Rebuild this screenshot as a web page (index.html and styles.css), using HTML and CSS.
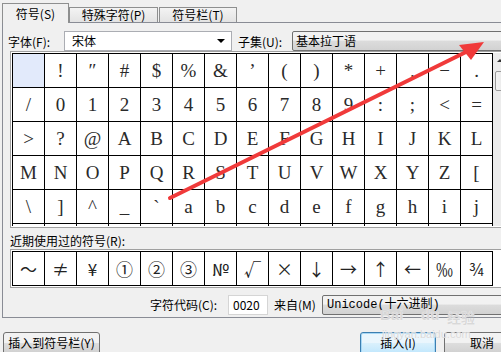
FILE: index.html
```html
<!DOCTYPE html>
<html lang="zh-CN">
<head>
  <meta charset="UTF-8">
  <title>符号</title>
  <link rel="stylesheet" href="styles.css">
</head>
<body>
  <div class="dialog">
    <div class="tabs">
      <div class="tab active">符号(S)</div>
      <div class="tab t2">特殊字符(P)</div>
      <div class="tab t3">符号栏(T)</div>
    </div>

    <div class="panel">
      <div class="font-row">
        <span class="lbl-font">字体(F):</span>
        <div class="combo font-select"><span>宋体</span><i class="caret"></i></div>
        <span class="lbl-subset">子集(U):</span>
        <div class="combo subset-select"><span>基本拉丁语</span></div>
      </div>

      <div class="frame">
        <div class="grid-view">
          <div class="grid">
            <span class="sel"></span><span>!</span><span>″</span><span>#</span><span>$</span><span>%</span><span>&amp;</span><span>’</span><span>(</span><span>)</span><span>*</span><span>+</span><span>,</span><span>−</span><span>.</span>
            <span>/</span><span>0</span><span>1</span><span>2</span><span>3</span><span>4</span><span>5</span><span>6</span><span>7</span><span>8</span><span>9</span><span>:</span><span>;</span><span>&lt;</span><span>=</span>
            <span>&gt;</span><span>?</span><span>@</span><span>A</span><span>B</span><span>C</span><span>D</span><span>E</span><span>F</span><span>G</span><span>H</span><span>I</span><span>J</span><span>K</span><span>L</span>
            <span>M</span><span>N</span><span>O</span><span>P</span><span>Q</span><span>R</span><span>S</span><span>T</span><span>U</span><span>V</span><span>W</span><span>X</span><span>Y</span><span>Z</span><span>[</span>
            <span>\</span><span>]</span><span>^</span><span>_</span><span>`</span><span>a</span><span>b</span><span>c</span><span>d</span><span>e</span><span>f</span><span>g</span><span>h</span><span>i</span><span>j</span>
            <span></span><span></span><span></span><span></span><span></span><span></span><span></span><span></span><span></span><span></span><span></span><span></span><span></span><span></span><span></span>
          </div>
        </div>
        <div class="scrollbar">
          <i class="up"></i>
          <div class="thumb"></div>
        </div>
      </div>

      <div class="recent-label">近期使用过的符号(R):</div>

      <div class="frame">
        <div class="grid recent">
          <span>〜</span><span>≠</span><span>¥</span><span>①</span><span>②</span><span>③</span><span>№</span><span>√</span><span>×</span><span>↓</span><span>→</span><span>↑</span><span>←</span><span>‰</span><span>¾</span>
        </div>
      </div>

      <div class="code-row">
        <span class="lbl-code">字符代码(C):</span>
        <div class="code-input">0020</div>
        <span class="lbl-from">来自(M)</span>
        <div class="combo from-select"><span>Unicode(十六进制)</span></div>
      </div>
    </div>

    <div class="buttons">
      <div class="btn btn-bar">插入到符号栏(Y)</div>
      <div class="btn btn-insert">插入(I)</div>
      <div class="btn btn-cancel">取消</div>
    </div>
  </div>

  <!-- watermark + annotation arrow sit on top of the dialog -->
  <div class="watermark">
    <span class="wm-bai">Bai</span><span class="wm-du">du</span><span class="wm-jy">经验</span>
    <span class="wm-url">jingyan.baidu.com</span>
  </div>

  <svg class="arrow" width="501" height="352" viewBox="0 0 501 352">
    <line x1="170" y1="198" x2="468" y2="51" stroke="#f03a3a" stroke-width="4" stroke-linecap="round"/>
    <polygon points="484,42 459,45 471,60" fill="#f03a3a"/>
  </svg>
</body>
</html>
```

FILE: styles.css
```css
* {
  box-sizing: border-box;
}
body {
  margin: 0;
  width: 501px;
  height: 352px;
  overflow: hidden;
  position: relative;
  background: #f0f0f0;
  color: #000;
  font-family: "Noto Sans CJK SC", "Liberation Sans", sans-serif;
  font-size: 12px;
}
.dialog {
  width: 540px;
}

/* tabs */
.tabs {
  display: flex;
  align-items: flex-end;
  height: 22px;
  padding-left: 2px;
}
.tab {
  height: 15px;
  line-height: 14px;
  border: 1px solid #8e8f8f;
  border-bottom: none;
  background: linear-gradient(#f3f3f3, #e3e3e3);
  text-align: center;
  white-space: nowrap;
}
.tab.active {
  position: relative;
  z-index: 1;
  width: 67px;
  height: 20px;
  line-height: 19px;
  margin-bottom: -1px;
  background: #f0f0f0;
}
.t2 {
  width: 89px;
}
.t3 {
  width: 78px;
  margin-left: 1px;
}

.panel {
  margin-left: 2px;
  border: 1px solid #898c95;
  padding: 8px 0 2px 5px;
  background: #f0f0f0;
}

/* font row */
.font-row {
  display: flex;
  align-items: center;
  height: 20px;
}
.lbl-font {
  width: 56px;
}
.lbl-subset {
  width: 54px;
  margin-left: 6px;
}
.combo {
  height: 20px;
  line-height: 18px;
  padding-left: 4px;
  border: 1px solid #abadb3;
  background: #fff;
  position: relative;
  white-space: nowrap;
}
.font-select {
  width: 168px;
  padding-left: 7px;
}
.caret {
  position: absolute;
  right: 6px;
  top: 7px;
  border-left: 4px solid transparent;
  border-right: 4px solid transparent;
  border-top: 4px solid #000;
}
.subset-select {
  width: 230px;
  padding-left: 3px;
  border-color: #707070;
  border-radius: 2px;
  background: linear-gradient(#f2f2f2 45%, #dcdcdc 50%, #d2d2d2);
}

/* symbol grid */
.frame {
  display: flex;
  margin-left: 2px;
  border: 1px solid #a0a0a0;
  padding: 1px;
  background: #fff;
}
.frame:first-of-type {
  margin-top: 6px;
}
.grid-view {
  height: 173px;
  overflow: hidden;
}
.grid {
  display: grid;
  grid-template-columns: repeat(15, 32px);
  width: 481px;
  border-left: 1px solid #000;
  border-top: 1px solid #000;
}
.grid span {
  height: 34px;
  display: flex;
  align-items: center;
  justify-content: center;
  border-right: 1px solid #000;
  border-bottom: 1px solid #000;
  font-family: "Liberation Serif", "DejaVu Serif", serif;
  font-size: 19px;
  color: #2a2a2a;
}
.grid span.sel {
  background: #e2eafb;
}
.grid.recent span {
  font-family: "Noto Sans CJK SC", "DejaVu Sans", sans-serif;
  font-size: 17px;
  color: #222;
}
.scrollbar {
  width: 17px;
  height: 173px;
  background: #ececec;
  padding-top: 6px;
}
.scrollbar .up {
  display: block;
  margin-left: 4px;
  width: 0;
  border-left: 3px solid transparent;
  border-right: 3px solid transparent;
  border-bottom: 3px solid #333;
}
.scrollbar .thumb {
  margin: 9px 0 0 2px;
  width: 14px;
  height: 20px;
  border: 1px solid #9a9a9a;
  border-radius: 2px;
  background: linear-gradient(90deg, #f4f4f4, #e2e2e2);
}

.recent-label {
  height: 21px;
  padding: 5px 0 0 2px;
  line-height: 16px;
}

/* code row */
.code-row {
  display: flex;
  align-items: center;
  height: 21px;
  margin-top: 6px;
  padding-left: 142px;
}
.lbl-code {
  width: 78px;
}
.code-input {
  width: 40px;
  height: 20px;
  line-height: 18px;
  padding-left: 4px;
  border: 1px solid #d5d5d5;
  background: #fff;
}
.lbl-from {
  width: 54px;
  padding-left: 6px;
}
.from-select {
  width: 200px;
  border-color: #707070;
  border-radius: 2px;
  background: linear-gradient(#f2f2f2 45%, #dcdcdc 50%, #d2d2d2);
  font-family: "Liberation Mono", "Noto Sans CJK SC", monospace;
}

/* buttons */
.buttons {
  display: flex;
  margin-top: 14px;
}
.btn {
  height: 23px;
  line-height: 19px;
  text-align: center;
  border: 1px solid #707070;
  border-radius: 3px;
  background: linear-gradient(#f2f2f2 45%, #dddddd 50%, #cfcfcf);
  white-space: nowrap;
}
.btn-bar {
  width: 97px;
  margin-left: 3px;
}
.btn-insert {
  width: 76px;
  margin-left: 260px;
  border-color: #3c7fb1;
  box-shadow: inset 0 0 0 1px #a8d8f5;
  background: linear-gradient(#eaf6fd 45%, #d9f0fc 50%, #bee6fd);
}
.btn-cancel {
  width: 76px;
  margin-left: 8px;
}

/* overlays */
.watermark {
  position: absolute;
  left: 380px;
  top: 296px;
  width: 110px;
  height: 48px;
  color: #d8d8d8;
  text-shadow: 0 0 1px #fff;
  font-family: "Liberation Sans", sans-serif;
  font-weight: bold;
}
.wm-bai {
  position: absolute;
  left: 0;
  top: 10px;
  font-size: 15px;
}
.wm-du {
  position: absolute;
  left: 41px;
  top: 10px;
  font-size: 15px;
}
.wm-jy {
  position: absolute;
  left: 67px;
  top: 11px;
  font-size: 14px;
  font-family: "Noto Sans CJK SC", sans-serif;
}
.wm-url {
  position: absolute;
  left: 2px;
  top: 32px;
  font-size: 11px;
  font-weight: normal;
}
.arrow {
  position: absolute;
  left: 0;
  top: 0;
  pointer-events: none;
}
```
